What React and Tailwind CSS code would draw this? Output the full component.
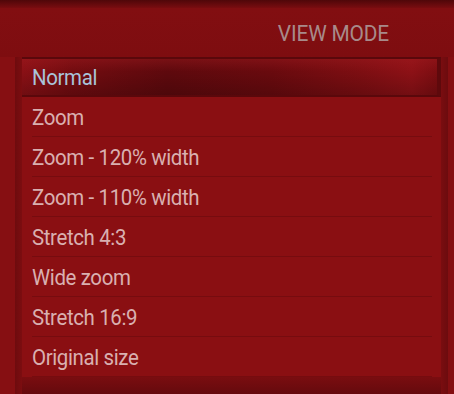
import React from "react";

const items = [
  "Normal",
  "Zoom",
  "Zoom - 120% width",
  "Zoom - 110% width",
  "Stretch 4:3",
  "Wide zoom",
  "Stretch 16:9",
  "Original size",
];

export default function App() {
  return (
    <div className="w-[454px] h-[394px] overflow-hidden bg-[#8b0f12] flex flex-col font-['Roboto',sans-serif]">
      <div className="h-[8px] bg-gradient-to-b from-[#4f0709] to-[#7a0d10]" />
      <div className="h-[49px] flex items-center justify-end pr-[65px] pt-[3px] bg-gradient-to-b from-[#820e11] to-[#7e0d10]">
        <span className="text-[22px] leading-none tracking-[-0.2px] scale-x-[0.95] origin-right text-[#a88a8a] whitespace-nowrap">
          VIEW MODE
        </span>
      </div>
      <div className="flex flex-1">
        <div className="w-[15px] bg-[#860f12]" />
        <div className="w-[7px] bg-gradient-to-r from-[#6e0b0e] to-[#7c0d10]" />
        <div className="flex flex-col w-[419px]">
          {items.map((t, i) => (
            <div
              key={t}
              className={
                i === 0
                  ? "h-[40px] flex items-center pl-[10px] pt-[2px] border-t-2 border-b-2 border-r-4 border-t-[#5a080b] border-b-[#5a080b] border-r-[#5e090c] bg-[linear-gradient(180deg,rgba(170,30,35,0.35)_0%,rgba(0,0,0,0)_35%,rgba(0,0,0,0.18)_100%),linear-gradient(90deg,#8a1015_0%,#720c10_12%,#5e090d_35%,#690a0e_60%,#7e0e12_82%,#8d1116_94%,#7c0d11_100%)]"
                  : "h-[40px] flex items-center pl-[10px] pt-[2px] bg-[#8a0f12] relative"
              }
            >
              <span
                className={
                  (i === 0 ? "text-[#a9c3d9]" : "text-[#d9b0b0]") +
                  " text-[22px] leading-none tracking-[-0.4px] scale-x-[0.93] origin-left whitespace-nowrap"
                }
              >
                {t}
              </span>
              {i > 0 && (
                <div className="absolute left-[10px] right-[9px] bottom-0 h-px bg-[#760c0f]" />
              )}
            </div>
          ))}
          <div className="flex-1 bg-gradient-to-b from-[#7a0d10] to-[#650a0d]" />
        </div>
        <div className="w-[7px] bg-gradient-to-r from-[#7a0d10] to-[#6c0b0e]" />
        <div className="flex-1 bg-[#840e11]" />
      </div>
    </div>
  );
}
